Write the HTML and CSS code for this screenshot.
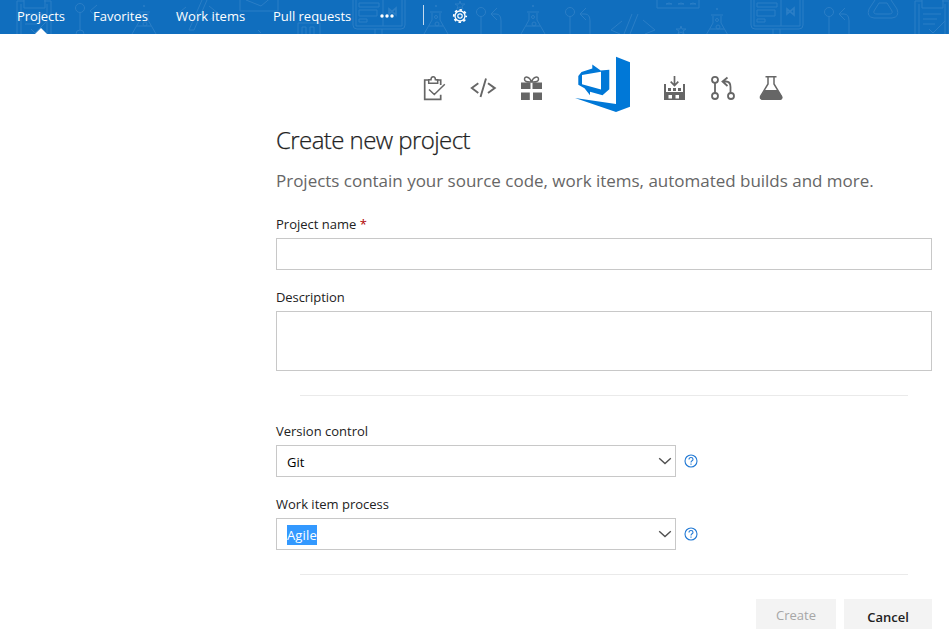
FILE: index.html
```html
<!DOCTYPE html>
<html lang="en">
<head>
<meta charset="utf-8">
<title>Create new project</title>
<link rel="stylesheet" href="styles.css">
</head>
<body>
<header class="topbar">
  <svg class="pattern" width="949" height="34" viewBox="0 0 949 34" fill="none" stroke="#2b7ec6" stroke-width="1" aria-hidden="true">
    <defs>
      <g id="flask"><path d="M-6 0h12M-4 1v7L-12 22M4 1v7L12 22M-7 14H7"/><circle cx="0" cy="5" r="1.500"/><circle cx="1" cy="12" r="2"/><circle cx="0" cy="-6" r=".7"/></g>
      <g id="branch"><circle cx="0" cy="12" r="4.500"/><path d="M0 17V34M16 8l-6 6 6 6M10 14h5q5 0 5 7v13"/></g>
      <g id="screen"><path d="M0 0v25q0 4 4 4h44q4 0 4-4V0M3 0v26h46V0M30 0v26M6 3h20v4H6zM6 10h18v6H6zM6 19h8v3H6zM22 29v5M29 29v5"/><path d="M36 9l7 6V8l-7 6z" stroke-width="1.700"/></g>
      <g id="clip"><path d="M0 34V1h7M34 34V1h-7M4 34V4M30 34V4M7 0v8h21V0M8 14h18M8 19h14M8 24h12M14 29l4 4 12-12"/></g>
    </defs>
    <use href="#clip" x="17"/>
    <g><circle cx="80" cy="8" r="4.500"/><path d="M80 13v17M97 5l-7 6 7 6"/><circle cx="80" cy="34" r="4"/></g>
    <use href="#flask" x="144" y="12"/>
    <path d="M186 7l-10 8 10 7M202 0l-13 30h5L207 0M209 6l10 8-10 6M240 0v11h38V0M246 0l15 6 12-10M298 34V23h22v11M302 34v-7h4v7M310 34v-7h4v7M258 30l3 3"/>
    <use href="#screen" x="353"/>
    <use href="#flask" x="436" y="12"/>
    <path d="M460 1l1 3h4l-3 2 1 3-3-2-3 2 1-3-3-2h4z"/>
    <use href="#branch" x="481"/>
    <use href="#flask" x="533" y="12"/>
    <use href="#branch" x="570"/>
    <path d="M622 21l-11 9 9 4M632 14l-8 20M638 14l-8 20M643 20l12 10-10 4M657 0v8h42V0M666 4q3-2 6 0zM678 4q3-2 6 0zM690 4q3-2 6 0z"/>
    <path d="M681 26l1 3h4l-3 2 1 3-3-2-3 2 1-3-3-2h4z"/>
    <use href="#flask" x="717" y="15"/>
    <use href="#screen" x="751"/>
    <use href="#branch" x="829"/>
    <path d="M875 0l-6 9q-3 8 5 9h18q8-1 5-9l-6-9M879 3l-5 8q-1 3 3 3h12q4 0 3-3l-5-8z"/>
    <use href="#clip" x="915"/>
  </svg>
  <nav class="nav">
    <a class="nav-item active projects">Projects</a>
    <a class="nav-item favorites">Favorites</a>
    <a class="nav-item work">Work items</a>
    <a class="nav-item pulls">Pull requests</a>
    <svg class="more" width="14" height="4" viewBox="0 0 14 4" fill="#fff"><circle cx="2" cy="2" r="1.700"/><circle cx="7" cy="2" r="1.700"/><circle cx="12" cy="2" r="1.700"/></svg>
    <span class="divider"></span>
    <svg class="gear" width="16" height="16" viewBox="-8 -8 16 16" fill="none" stroke="#fff">
      <circle r="5" stroke-width="1.300"/><circle r="2.200" stroke-width="1.200"/>
      <circle r="6.200" stroke-width="1.800" stroke-dasharray="2.500 2.370" stroke-dashoffset="1.250"/>
    </svg>
  </nav>
</header>
<main class="page">
  <svg class="banner" width="380" height="66" viewBox="415 50 380 66" fill="none" stroke="#666" stroke-width="1.500">
    <g><path d="M429 80h-4.300v19.300h16v-4.500M440.700 85v-5h-4.200" stroke-width="1.700"/><path d="M428.700 83.300v-3.600h2.300q0-3 2.200-3t2.200 3h2.300v3.600zM429 89.500l5.300 5 10.500-10.200"/></g>
    <path d="M478.300 83.300l-6.500 4.800 6.500 4.900M488 83.300l6.800 4.800-6.800 4.900M486 78.500l-5.500 18.500" stroke-width="1.900"/>
    <g><path d="M521 82.500h9.500v6.500h-9.500zM532.500 82.500h9.500v6.500h-9.500zM521 92.500h8.800v7.500H521zM533 92.500h9v7.500h-9z" fill="#666" stroke="none"/><path d="M531.500 82q-7 .5-7-2.800c0-3.200 5-3.200 7 2.800q7 .5 7-2.800c0-3.200-5-3.200-7 2.800"/></g>
    <g fill="#0078d7" stroke="none"><path fill-rule="evenodd" d="M578.300 76l3.200-4 10.800-3.500v-4l8.400 6 8.600-.8v19.600l-6.800 6-12.500-3.600v3.600l-5.500-7-6.200-3.600zM582 75v9.200l19 5.300V71.700z"/><path d="M616 56.700l14 5.600v44.400L616 112l-41-14 41 6z"/></g>
    <g><path d="M664 84h2v5h17v-5h2v16h-21zM668.500 95h3.500v3.500h-3.500zM675.500 95h3.500v3.500h-3.500z" fill="#666" fill-rule="evenodd" stroke="none"/><path d="M666 87.500h17v4.500h-17z" fill="#fff" stroke="none"/><path d="M668 88h3v3h-3zM673 88h3v3h-3zM678 88h3v3h-3z" fill="#666" stroke="none"/><path d="M674.500 76v9.500M670.700 81.700l3.800 3.800 3.800-3.800" stroke-width="1.700"/></g>
    <g stroke-width="1.800"><circle cx="715" cy="79.800" r="3"/><circle cx="715" cy="96" r="3"/><circle cx="731" cy="96" r="3"/><path d="M715 83v10M727.500 77.500l-5 4 5 4.500M722.500 81.500h3.500q4.500 0 4.500 5.500v6"/></g>
    <g><path d="M765.500 76.800h11M768 77v7l-7.300 12q-1 3.200 2 3.200h16.600q3 0 2-3.200L774 84v-7"/><path d="M764.500 90h13l5 7q0 3-2.500 3h-18q-2-.5-1.500-3z" fill="#666" stroke="none"/></g>
  </svg>
  <form class="form">
    <h1 class="title">Create new project</h1>
    <p class="subtitle">Projects contain your source code, work items, automated builds and more.</p>
    <label class="label">Project name <span class="required">*</span></label>
    <div class="box input"></div>
    <label class="label description">Description</label>
    <div class="box textarea"></div>
    <hr class="rule">
    <label class="label version">Version control</label>
    <div class="row">
      <div class="box select"><span>Git</span><svg class="chevron" width="14" height="8" viewBox="0 0 14 8"><path d="M1.200 1.200L7 6.500l5.800-5.300"/></svg></div>
      <svg class="help" width="14" height="14" viewBox="0 0 14 14"><circle cx="7" cy="7" r="6"/><path d="M5 5.500q0-2 2-2t2 1.700q0 1-1 1.600-1 .6-1 1.700M7 9.500v1.200"/></svg>
    </div>
    <label class="label process">Work item process</label>
    <div class="row">
      <div class="box select"><span class="selected">Agile</span><svg class="chevron" width="14" height="8" viewBox="0 0 14 8"><path d="M1.200 1.200L7 6.500l5.800-5.300"/></svg></div>
      <svg class="help" width="14" height="14" viewBox="0 0 14 14"><circle cx="7" cy="7" r="6"/><path d="M5 5.500q0-2 2-2t2 1.700q0 1-1 1.600-1 .6-1 1.700M7 9.500v1.200"/></svg>
    </div>
    <hr class="rule">
    <div class="actions"><span class="button create">Create</span><span class="button cancel">Cancel</span></div>
  </form>
</main>
</body>
</html>
```
FILE: styles.css
```css
* { box-sizing: border-box; }
body { margin: 0; background: #fff; color: #222; font: 13px/20px "Open Sans", "Noto Sans", sans-serif; height: 639px; overflow: hidden; }
.topbar { position: relative; height: 34px; background: #106ebe; overflow: hidden; }
.pattern { position: absolute; inset: 0; }
.nav { position: relative; display: flex; height: 34px; padding-left: 17px; color: #fff; }
.nav-item { position: relative; height: 34px; line-height: 33px; margin-right: 28px; white-space: nowrap; }
.projects { width: 48px; letter-spacing: -.1px; }
.favorites { width: 55px; }
.work { width: 69px; letter-spacing: .05px; }
.pulls { width: 78px; letter-spacing: -.03px; }
.active::after { content: ""; position: absolute; left: 18px; bottom: 0; border: 6px solid transparent; border-top: 0; border-bottom-color: #fff; }
.more { margin: 14px 29px 0 1px; }
.divider { width: 1px; height: 20px; margin-top: 5px; background: #c4daee; }
.gear { margin: 8px 0 0 28px; }
.page { padding-left: 276px; }
.banner { display: block; margin: 16px 0 0 139px; }
.form { width: 656px; }
.title { margin: 6px 0 0; font-size: 24px; line-height: 36px; font-weight: 300; letter-spacing: -.57px; -webkit-text-stroke: .25px #222; }
.subtitle { margin: 10px 0 0; font-size: 17px; line-height: 26px; letter-spacing: -.015px; color: #666; white-space: nowrap; }
.label { display: block; height: 20px; margin: 20px 0 4px; white-space: nowrap; }
.required { color: #b00000; }
.box { border: 1px solid #c8c8c8; background: #fff; }
.input { height: 32px; }
.description { margin-top: 17px; letter-spacing: -.08px; }
.textarea { height: 60px; }
.rule { height: 1px; border: 0; margin: 24px; background: #eaeaea; }
.version { margin-top: 25px; }
.row { display: flex; align-items: center; gap: 8px; }
.select { display: flex; align-items: center; justify-content: space-between; width: 400px; height: 32px; padding: 1px 3px 0 10px; color: #000; }
.selected { background: #3399ff; color: #fff; letter-spacing: .15px; }
.chevron { margin-bottom: 1px; fill: none; stroke: #505050; stroke-width: 1.4; }
.help { fill: none; stroke: #2078d4; stroke-width: 1.1; }
.process { margin-top: 17px; }
.actions { display: flex; justify-content: flex-end; gap: 8px; }
.button { height: 30px; background: #f3f3f3; text-align: center; }
.create { width: 80px; line-height: 32px; color: #a6a6a6; }
.cancel { width: 88px; line-height: 36px; color: #212121; font-weight: 600; }
```
